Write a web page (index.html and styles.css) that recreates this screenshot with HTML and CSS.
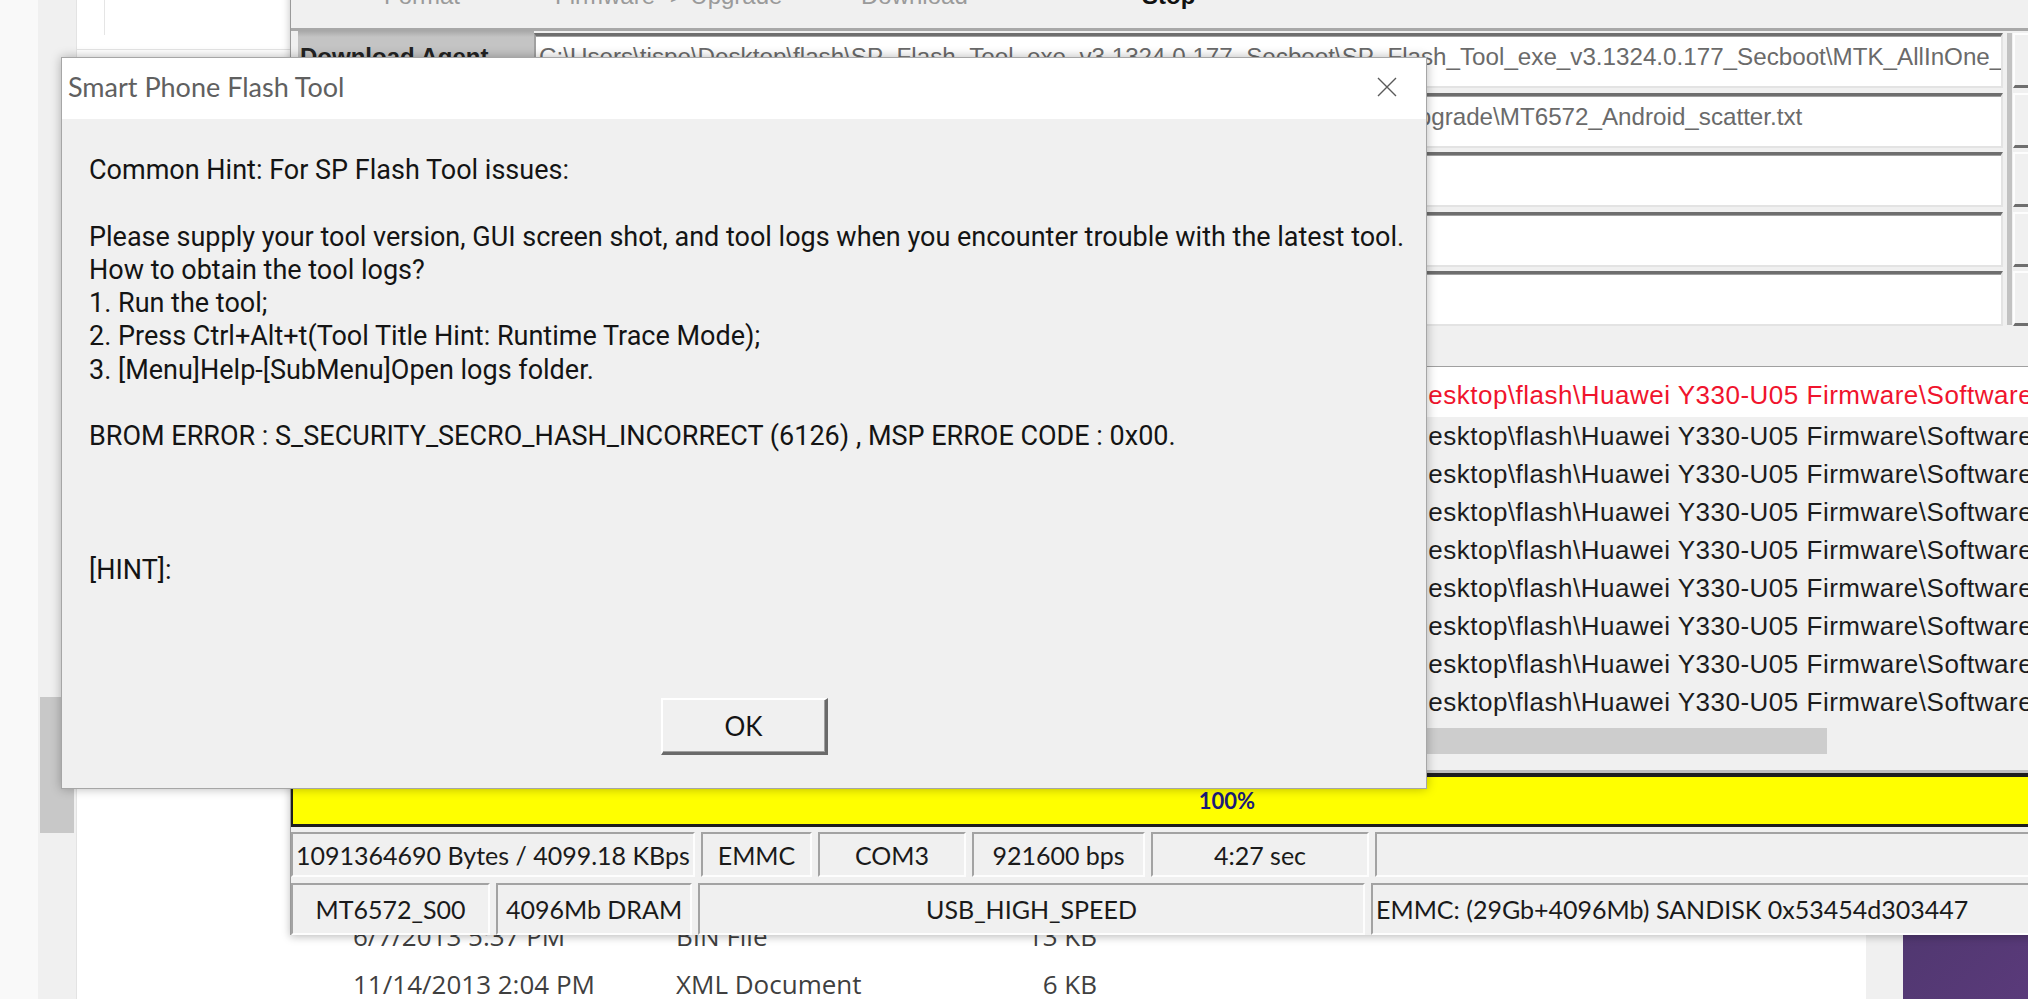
FILE: index.html
```html
<!DOCTYPE html>
<html lang="en">
<head>
    <meta charset="UTF-8">
    <title>Smart Phone Flash Tool</title>
    <link rel="stylesheet" href="styles.css">
</head>
<body>
    <div class="desktop">

        <!-- Explorer window in the background -->
        <div class="explorer">
            <div class="side-strip"></div>
            <div class="side-scroll"><div class="side-thumb"></div></div>
            <div class="files">
                <div class="nav-pane"></div>
                <div class="file-list">
                    <div class="file-row">
                        <span class="f-date">6/7/2013 5:37 PM</span>
                        <span class="f-type">BIN File</span>
                        <span class="f-size">13 KB</span>
                    </div>
                    <div class="file-row">
                        <span class="f-date">11/14/2013 2:04 PM</span>
                        <span class="f-type">XML Document</span>
                        <span class="f-size">6 KB</span>
                    </div>
                </div>
            </div>
            <div class="explorer-edge"></div>
        </div>

        <!-- SP Flash Tool main window -->
        <div class="flash-window">
            <div class="toolbar">
                <span class="tool-btn" style="width:171px">Format</span>
                <span class="tool-btn" style="width:306px">Firmware -&gt; Upgrade</span>
                <span class="tool-btn" style="width:281px">Download</span>
                <span class="tool-btn active">Stop</span>
            </div>

            <div class="files-group">
                <div class="labels">
                    <div class="label">Download Agent</div>
                </div>
                <div class="fields">
                    <div class="field">C:\Users\tispe\Desktop\flash\SP_Flash_Tool_exe_v3.1324.0.177_Secboot\SP_Flash_Tool_exe_v3.1324.0.177_Secboot\MTK_AllInOne_DA.bin</div>
                    <div class="field">C:\Users\tispe\Desktop\flash\Huawei Y330-U05 Firmware\Software\V100R001B\Upgrade\MT6572_Android_scatter.txt</div>
                    <div class="field"></div>
                    <div class="field"></div>
                    <div class="field"></div>
                </div>
                <div class="splitter"></div>
                <div class="buttons">
                    <div class="side-btn"></div>
                    <div class="side-btn"></div>
                    <div class="side-btn"></div>
                    <div class="side-btn"></div>
                    <div class="side-btn"></div>
                </div>
            </div>

            <div class="rom-list">
                <table>
                    <tbody>
                        <tr class="selected"><td class="c-chk"></td><td class="c-name">PRELOADER</td><td class="c-addr">0x0000000000000000</td><td class="c-addr">0x000000000001b3f7</td><td class="c-region">EMMC_BOOT_1</td><td class="c-loc">C:\Users\tispe\Desktop\flash\Huawei Y330-U05 Firmware\Software\Upgrade\preloader_y330.bin</td></tr>
                        <tr><td class="c-chk"></td><td class="c-name">MBR</td><td class="c-addr">0x0000000000600000</td><td class="c-addr">0x00000000006001ff</td><td class="c-region">EMMC_USER</td><td class="c-loc">C:\Users\tispe\Desktop\flash\Huawei Y330-U05 Firmware\Software\Upgrade\MBR</td></tr>
                        <tr><td class="c-chk"></td><td class="c-name">EBR1</td><td class="c-addr">0x0000000000680000</td><td class="c-addr">0x00000000006801ff</td><td class="c-region">EMMC_USER</td><td class="c-loc">C:\Users\tispe\Desktop\flash\Huawei Y330-U05 Firmware\Software\Upgrade\EBR1</td></tr>
                        <tr><td class="c-chk"></td><td class="c-name">UBOOT</td><td class="c-addr">0x0000000001d20000</td><td class="c-addr">0x0000000001d3ffff</td><td class="c-region">EMMC_USER</td><td class="c-loc">C:\Users\tispe\Desktop\flash\Huawei Y330-U05 Firmware\Software\Upgrade\lk.bin</td></tr>
                        <tr><td class="c-chk"></td><td class="c-name">BOOTIMG</td><td class="c-addr">0x0000000001d80000</td><td class="c-addr">0x00000000023fffff</td><td class="c-region">EMMC_USER</td><td class="c-loc">C:\Users\tispe\Desktop\flash\Huawei Y330-U05 Firmware\Software\Upgrade\boot.img</td></tr>
                        <tr><td class="c-chk"></td><td class="c-name">RECOVERY</td><td class="c-addr">0x0000000002380000</td><td class="c-addr">0x00000000029fffff</td><td class="c-region">EMMC_USER</td><td class="c-loc">C:\Users\tispe\Desktop\flash\Huawei Y330-U05 Firmware\Software\Upgrade\recovery.img</td></tr>
                        <tr><td class="c-chk"></td><td class="c-name">SEC_RO</td><td class="c-addr">0x0000000002980000</td><td class="c-addr">0x0000000002f7ffff</td><td class="c-region">EMMC_USER</td><td class="c-loc">C:\Users\tispe\Desktop\flash\Huawei Y330-U05 Firmware\Software\Upgrade\secro.img</td></tr>
                        <tr><td class="c-chk"></td><td class="c-name">LOGO</td><td class="c-addr">0x0000000003040000</td><td class="c-addr">0x000000000313ffff</td><td class="c-region">EMMC_USER</td><td class="c-loc">C:\Users\tispe\Desktop\flash\Huawei Y330-U05 Firmware\Software\Upgrade\logo.bin</td></tr>
                        <tr><td class="c-chk"></td><td class="c-name">ANDROID</td><td class="c-addr">0x0000000003d40000</td><td class="c-addr">0x000000002bd3ffff</td><td class="c-region">EMMC_USER</td><td class="c-loc">C:\Users\tispe\Desktop\flash\Huawei Y330-U05 Firmware\Software\Upgrade\system.img</td></tr>
                    </tbody>
                </table>
            </div>

            <div class="hscroll"><div class="hthumb"></div></div>

            <div class="progress">
                <span class="progress-text">100%</span>
            </div>

            <div class="status-row">
                <div class="cell left" style="width:404px">1091364690 Bytes / 4099.18 KBps</div>
                <div class="cell" style="width:111px">EMMC</div>
                <div class="cell" style="width:148px">COM3</div>
                <div class="cell" style="width:173px">921600 bps</div>
                <div class="cell" style="width:218px">4:27 sec</div>
                <div class="cell grow"></div>
            </div>
            <div class="status-row second">
                <div class="cell" style="width:199px">MT6572_S00</div>
                <div class="cell" style="width:196px">4096Mb DRAM</div>
                <div class="cell" style="width:667px">USB_HIGH_SPEED</div>
                <div class="cell left grow">EMMC: (29Gb+4096Mb) SANDISK 0x53454d303447</div>
            </div>
        </div>

        <!-- Error dialog -->
        <div class="dialog">
            <div class="dialog-title">
                <span>Smart Phone Flash Tool</span>
                <svg class="close" width="20" height="20" viewBox="0 0 20 20">
                    <path d="M1 1 L19 19 M19 1 L1 19" stroke="#5a5a5a" stroke-width="1.4" fill="none"/>
                </svg>
            </div>
            <div class="dialog-body">
                <div class="message">Common Hint: For SP Flash Tool issues:

Please supply your tool version, GUI screen shot, and tool logs when you encounter trouble with the latest tool.
How to obtain the tool logs?
1. Run the tool;
2. Press Ctrl+Alt+t(Tool Title Hint: Runtime Trace Mode);
3. [Menu]Help-[SubMenu]Open logs folder.

BROM ERROR : S_SECURITY_SECRO_HASH_INCORRECT (6126) , MSP ERROE CODE : 0x00.



[HINT]:</div>
                <button class="ok-btn">OK</button>
            </div>
        </div>

    </div>
</body>
</html>
```

FILE: styles.css
```css
/* Desktop */

html, body {
    margin: 0;
    padding: 0;
}

body {
    width: 2028px;
    height: 999px;
    overflow: hidden;
    background: linear-gradient(135deg, #2a2148 0%, #4b2d6e 35%, #1f2a3e 60%, #5a3a7a 100%);
}

.desktop {
    position: relative;
    width: 2028px;
    height: 999px;
}

/* Explorer behind everything */
.explorer {
    position: absolute;
    left: 0;
    top: 0;
    width: 1903px;
    height: 999px;
    display: flex;
}

.side-strip {
    width: 38px;
    background-color: #f9f9f9;
}

.side-scroll {
    width: 38px;
    background-color: #f0f0f0;
}

.side-thumb {
    margin: 697px 0 0 2px;
    width: 34px;
    height: 136px;
    background-color: #c8c8c8;
}

.files {
    flex: 1;
    background-color: #fff;
    border-left: 1px solid #e3e3e3;
    font-family: "Open Sans", sans-serif;
    font-size: 26px;
    color: #3f3f3f;
}

.nav-pane {
    width: 213px;
    height: 50px;
    border-bottom: 1px solid #e5e5e5;
    box-sizing: border-box;
    background: linear-gradient(to right, transparent 27px, #e5e5e5 27px, #e5e5e5 28px, transparent 28px) no-repeat 0 0 / 100% 35px;
}

.file-list {
    padding: 862px 0 0 276px;
}

.file-row {
    display: flex;
    height: 48px;
    align-items: center;
}

.f-date {
    width: 323px;
}

.f-type {
    width: 250px;
}

.f-size {
    width: 171px;
    text-align: right;
}

.explorer-edge {
    width: 37px;
    background-color: #f0f0f0;
}

/* SP Flash Tool window */
.flash-window {
    position: absolute;
    left: 290px;
    top: -30px;
    width: 1870px;
    height: 965px;
    background-color: #f0f0f0;
    border-left: 1px solid #9a9a9a;
    box-shadow: 0 2px 8px rgba(0, 0, 0, 0.25);
    overflow: hidden;
    font-family: "Liberation Sans", Arial, sans-serif;
}

.toolbar {
    height: 58px;
    box-sizing: border-box;
    padding: 12px 0 0 93px;
    display: flex;
    font-size: 24px;
    line-height: 28px;
    color: #9a9a9a;
}

.tool-btn {
    display: inline-block;
}

.tool-btn.active {
    color: #111;
    font-weight: bold;
}

.files-group {
    height: 295px;
    display: flex;
    padding-left: 7px;
    border-top: 3px solid #a8a8a8;
    box-sizing: border-box;
}

.labels {
    width: 236px;
    background: linear-gradient(#a9a9a9, #c4c4c4 6px, #c4c4c4);
}

.label {
    font-weight: bold;
    font-size: 24px;
    color: #222;
    padding: 12px 0 0 2px;
}

.fields {
    width: 1469px;
    padding-top: 2px;
}

.field {
    height: 55px;
    margin-bottom: 4.5px;
    box-sizing: border-box;
    background-color: #fff;
    border-top: 3px solid #6e6e6e;
    border-left: 2px solid #a0a0a0;
    border-right: 2px solid #e3e3e3;
    border-bottom: 2px solid #e3e3e3;
    box-shadow: inset 0 1px 0 #a0a0a0;
    padding: 0 0 8px 3px;
    display: flex;
    align-items: center;
    font-size: 24.2px;
    color: #6a6a6a;
    white-space: nowrap;
    overflow: hidden;
}

.splitter {
    width: 5px;
    height: 292px;
    margin: 2px 1px 0 4px;
    background-color: #c2c2c2;
}

.buttons {
    width: 140px;
    padding-top: 2px;
}

.side-btn {
    height: 55px;
    margin-bottom: 4.5px;
    box-sizing: border-box;
    border-top: 2px solid #fdfdfd;
    border-left: 2px solid #fdfdfd;
    border-bottom: 3px solid #6e6e6e;
    background-color: #f0f0f0;
}

/* ROM list */
.rom-list {
    margin-top: 43px;
    height: 358px;
    border-top: 1px solid #a0a0a0;
    box-sizing: border-box;
    overflow: hidden;
}

.rom-list table {
    border-collapse: collapse;
    table-layout: fixed;
    width: 2244px;
    font-size: 26px;
    letter-spacing: 0.5px;
    color: #1c1c1c;
}

.rom-list td {
    height: 38px;
    padding: 0 4px;
    white-space: nowrap;
    overflow: hidden;
}

.rom-list tr:first-child td {
    height: 44px;
    padding-top: 6px;
}

.rom-list tr.selected {
    background-color: #fff;
    color: #f0142d;
}

.c-chk { width: 36px; }
.c-name { width: 170px; }
.c-addr { width: 245px; }
.c-region { width: 200px; }
.c-loc { width: 1300px; }

.hscroll {
    height: 34px;
    padding: 4px 0 0 6px;
    box-sizing: border-box;
}

.hthumb {
    width: 1530px;
    height: 26px;
    background-color: #cdcdcd;
}

/* progress */
.progress {
    margin-top: 15px;
    height: 54px;
    box-sizing: border-box;
    background-color: #ffff00;
    border-top: 4px solid #1e1e1e;
    border-bottom: 3px solid #1e1e1e;
    border-left: 2px solid #1e1e1e;
    box-shadow: 0 -3px 0 #bdbdbd;
    text-align: center;
    font-family: "Lato", sans-serif;
    font-weight: bold;
    font-size: 22px;
    color: #1b1b7a;
}

.progress-text {
    display: inline-block;
    padding-top: 10px;
}

/* status bar */
.status-row {
    display: flex;
    gap: 6px;
    margin-top: 5px;
    height: 45px;
    font-family: "Lato", sans-serif;
    font-size: 25px;
    color: #1a1a1a;
}

.status-row.second {
    margin-top: 6px;
    height: 52px;
}

.cell {
    box-sizing: border-box;
    border-top: 2px solid #a3a3a3;
    border-left: 2px solid #a3a3a3;
    border-bottom: 2px solid #fdfdfd;
    border-right: 2px solid #fdfdfd;
    display: flex;
    align-items: center;
    justify-content: center;
    white-space: nowrap;
    overflow: hidden;
}

.cell.left {
    justify-content: flex-start;
    padding-left: 3px;
}

.cell.grow {
    flex: 1;
}

/* dialog */
.dialog {
    position: absolute;
    left: 61px;
    top: 57px;
    width: 1366px;
    height: 732px;
    box-sizing: border-box;
    border: 1px solid #a6a6a6;
    box-shadow: 0 0 10px rgba(0, 0, 0, 0.28);
    background-color: #f0f0f0;
    display: flex;
    flex-direction: column;
    font-family: "Lato", sans-serif;
}

.dialog-title {
    height: 57px;
    background-color: #fff;
    display: flex;
    align-items: center;
    justify-content: space-between;
    padding: 0 29px 4px 6px;
    font-size: 27px;
    color: #606060;
}

.dialog-body {
    flex: 1;
    display: flex;
    flex-direction: column;
    padding: 35px 27px 33px 27px;
}

.message {
    flex: 1;
    white-space: pre;
    font-family: "Roboto", sans-serif;
    font-size: 27px;
    line-height: 33.3px;
    color: #141414;
}

.ok-btn {
    align-self: center;
    width: 167px;
    height: 57px;
    background-color: #f0f0f0;
    border-top: 2px solid #fff;
    border-left: 2px solid #fff;
    border-right: 3px solid #6a6a6a;
    border-bottom: 3px solid #6a6a6a;
    box-shadow: inset -1px -1px 0 #a0a0a0;
    font-family: "Lato", sans-serif;
    font-size: 26px;
    color: #141414;
    padding: 0;
}
```
